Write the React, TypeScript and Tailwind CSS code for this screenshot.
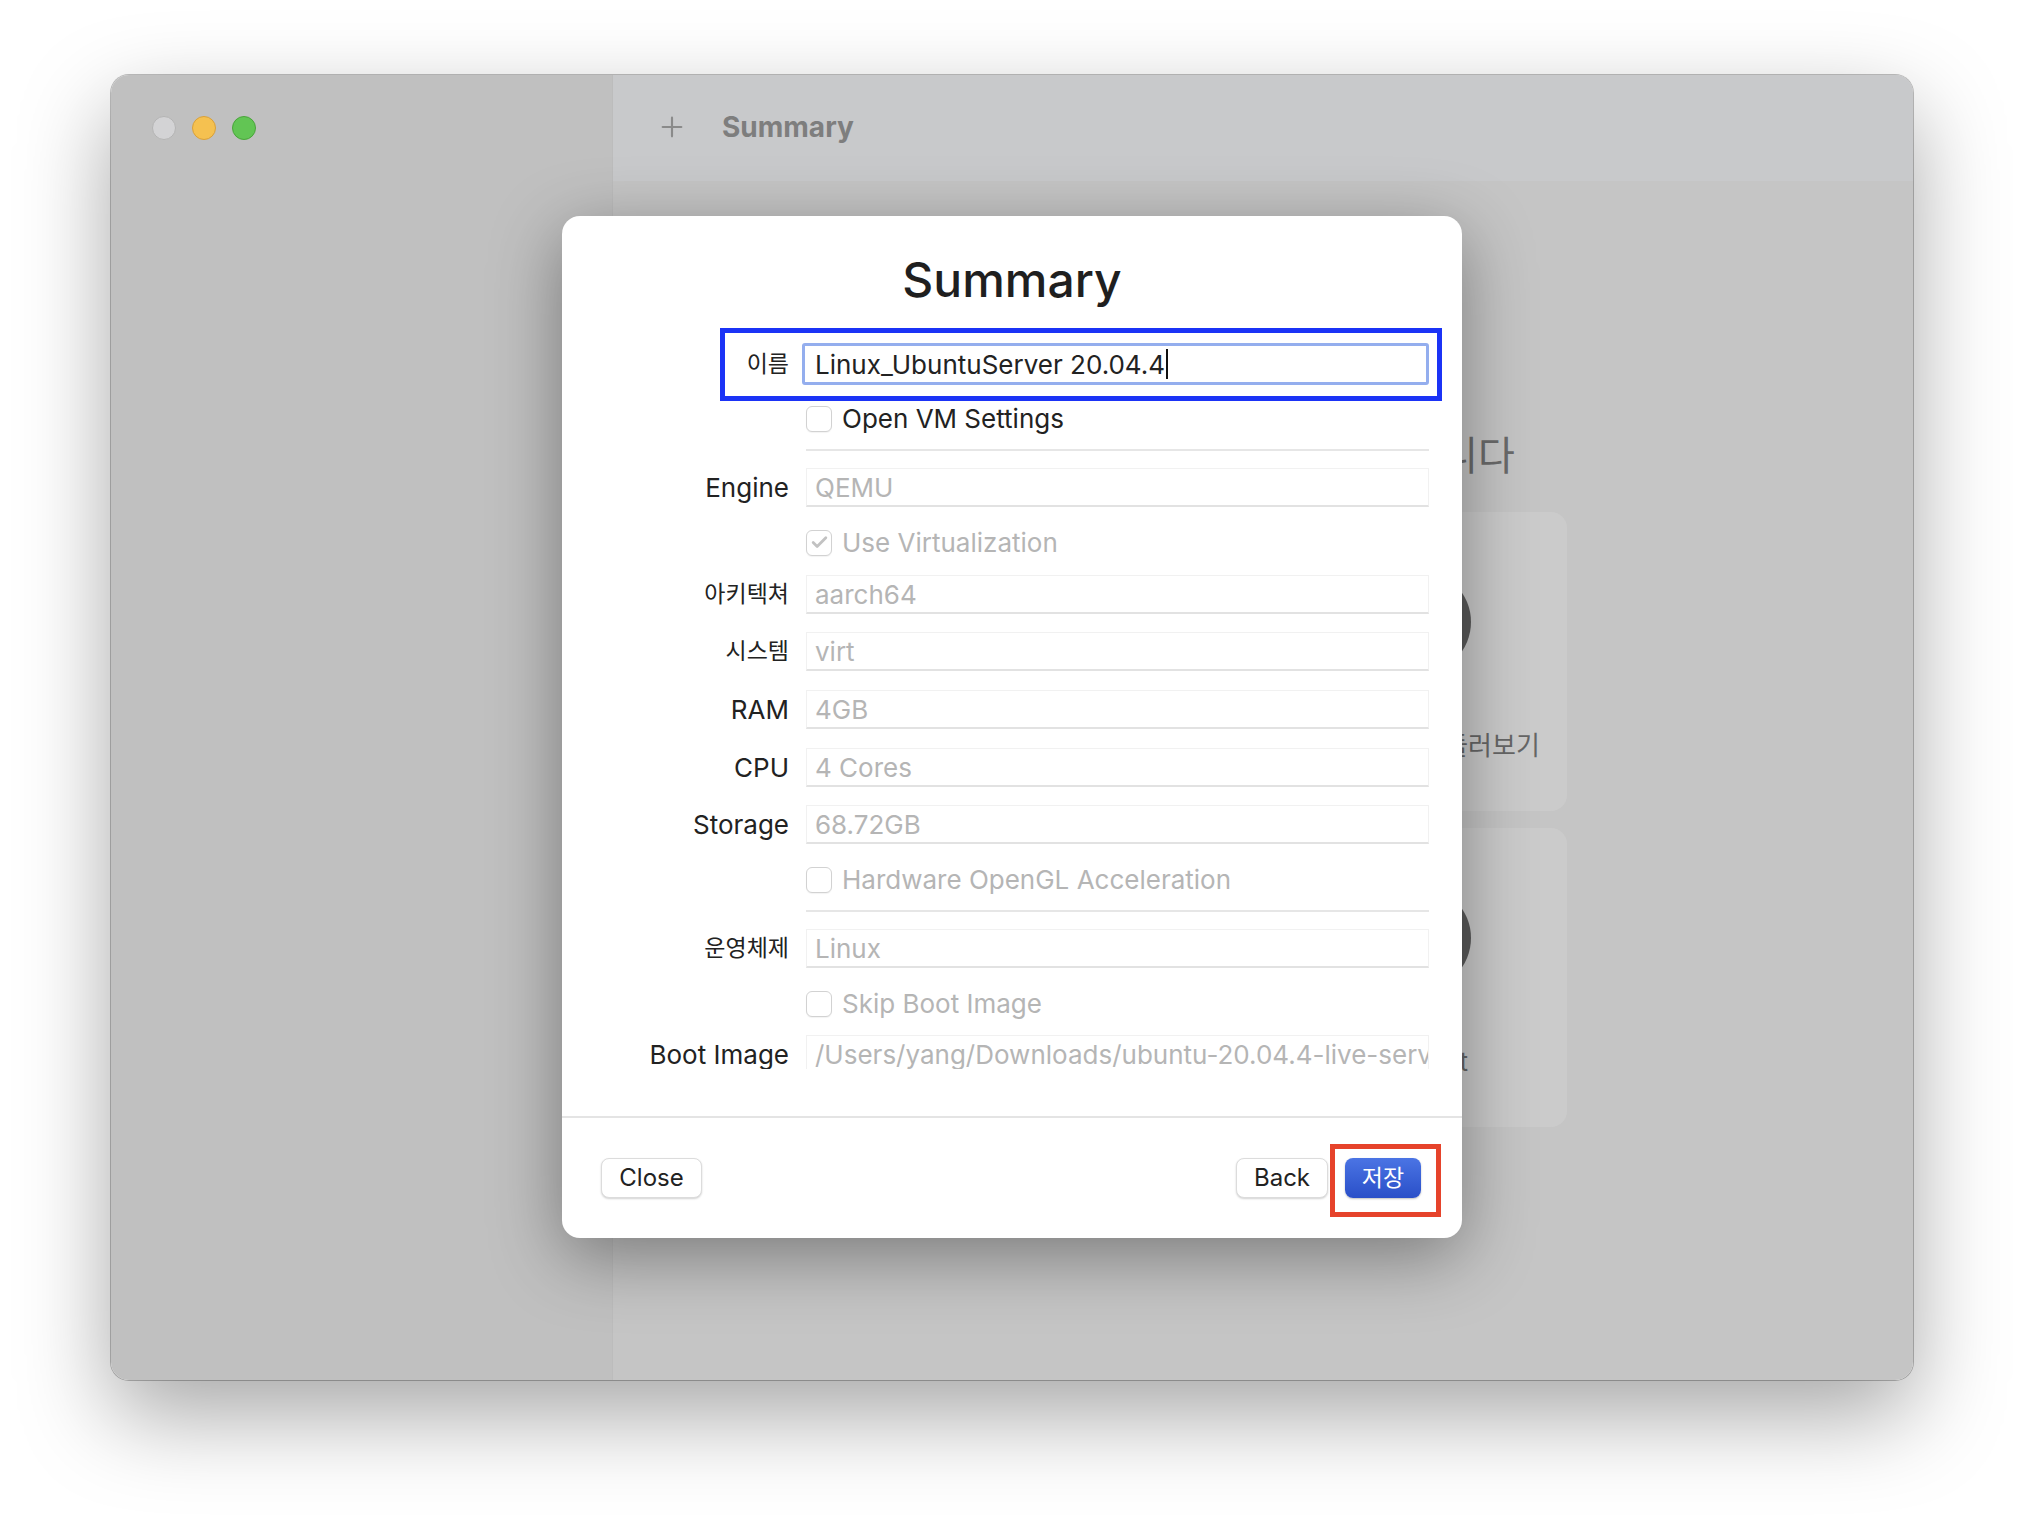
import { Plus, Check } from 'lucide-react'

const FONT = "font-['Inter','Noto_Sans_CJK_KR',sans-serif]"

function Field({ value }: { value: string }) {
  return (
    <div className="flex-1 min-w-0 h-[39px] flex items-center px-[8px] bg-white border border-[#f1f1f1] border-b-2 border-b-[#e2e2e2] text-[26px] text-[#b5b5b5] overflow-hidden whitespace-nowrap">
      {value}
    </div>
  )
}

function Row({ label, ko, value, className }: { label: string; ko?: boolean; value: string; className: string }) {
  return (
    <div className={`flex items-center shrink-0 pr-[33px] ${className}`}>
      <div className={`w-[227px] shrink-0 text-right text-[#222] whitespace-nowrap ${ko ? 'text-[23px]' : 'text-[26px]'}`}>{label}</div>
      <div className="ml-[17px] flex-1 min-w-0 flex">
        <Field value={value} />
      </div>
    </div>
  )
}

function Checkbox({ label, checked, disabled, className }: { label: string; checked?: boolean; disabled?: boolean; className: string }) {
  return (
    <div className={`flex items-center h-[39px] shrink-0 ml-[244px] ${className}`}>
      <div className="w-[26px] h-[26px] rounded-[6px] border border-[#d2d2d2] bg-white shadow-[0_1px_1px_rgba(0,0,0,0.05)] flex items-center justify-center">
        {checked && <Check className="w-[19px] h-[19px] text-[#c2c2c2]" strokeWidth={3.5} />}
      </div>
      <span className={`ml-[10px] text-[26px] ${disabled ? 'text-[#b5b5b5]' : 'text-[#222]'}`}>{label}</span>
    </div>
  )
}

function Separator({ className }: { className: string }) {
  return <div className={`h-[2px] shrink-0 bg-[#e6e6e6] ml-[244px] mr-[33px] ${className}`} />
}

export default function App() {
  return (
    <div className={`w-[2024px] h-[1528px] bg-white overflow-hidden pl-[111px] pt-[75px] ${FONT}`}>
      {/* window */}
      <div className="relative w-[1802px] h-[1305px] rounded-[18px] overflow-hidden flex ring-1 ring-black/25 shadow-[0_35px_90px_rgba(0,0,0,0.35)]">
        {/* sidebar */}
        <div className="w-[502px] h-full bg-[#c0c0c0] border-r border-[#bcbcbc] pt-[41px] pl-[41px]">
          <div className="flex gap-[16px]">
            <div className="w-[24px] h-[24px] rounded-full bg-[#d3d3d5] border border-[#b4b4b4]" />
            <div className="w-[24px] h-[24px] rounded-full bg-[#f5c150] border border-[#d8a03a]" />
            <div className="w-[24px] h-[24px] rounded-full bg-[#62c554] border border-[#4aa43b]" />
          </div>
        </div>

        {/* main */}
        <div className="flex-1 h-full bg-[#c5c5c5] flex flex-col">
          <div className="h-[106px] shrink-0 bg-[#c8c9cb] flex items-center pl-[43px] pb-[2px]">
            <Plus className="w-[32px] h-[32px] text-[#8a8a8a]" strokeWidth={1.6} />
            <span className="ml-[34px] text-[28px] font-bold text-[#7e7e7e]">Summary</span>
          </div>
          <div className="flex-1 flex flex-col items-center pt-[251px]">
            <div className="text-[40px] leading-[48px] text-[#6a6a6a] pl-[10px]">UTM에 오신 것을 환영합니다</div>
            <div className="mt-[32px] grid grid-cols-[296px_296px] gap-x-[16px] gap-y-[17px]">
              {['새 가상 머신 만들기', 'UTM 갤러리 둘러보기', '사용자 가이드', 'Support'].map((t) => (
                <div key={t} className="h-[299px] rounded-[16px] bg-[#cbcbcb] flex flex-col items-center pt-[58px]">
                  <div className="w-[104px] h-[104px] rounded-full bg-[#5b5b5b]" />
                  <div className="mt-[52px] text-[26px] text-[#666]">{t}</div>
                </div>
              ))}
            </div>
          </div>
        </div>

        {/* sheet */}
        <div className="absolute left-[451px] top-[141px] w-[900px] h-[1022px] bg-white rounded-[18px] flex flex-col shadow-[0_18px_70px_rgba(0,0,0,0.38)]">
          <div className="pt-[39px] text-[48px] leading-[50px] font-medium text-center text-[#1f1f1f] shrink-0">Summary</div>

          <div className="mt-[37px] h-[727px] overflow-hidden flex flex-col shrink-0">
            <div className="flex items-center h-[44px] shrink-0 pr-[33px]">
              <div className="w-[227px] shrink-0 text-right text-[23px] text-[#222]">이름</div>
              <div className="ml-[13px] flex-1 h-[42px] border-[3px] border-[#94aeee] rounded-[3px] flex items-center pl-[10px] text-[26px] text-[#222] whitespace-nowrap">
                Linux_UbuntuServer 20.04.4
                <span className="ml-[1px] w-[2px] h-[30px] bg-[#111]" />
              </div>
            </div>
            <Checkbox label="Open VM Settings" className="mt-[13px]" />
            <Separator className="mt-[11px]" />
            <Row label="Engine" value="QEMU" className="mt-[17px]" />
            <Checkbox label="Use Virtualization" checked disabled className="mt-[16px]" />
            <Row label="아키텍쳐" ko value="aarch64" className="mt-[13px]" />
            <Row label="시스템" ko value="virt" className="mt-[18px]" />
            <Row label="RAM" value="4GB" className="mt-[19px]" />
            <Row label="CPU" value="4 Cores" className="mt-[19px]" />
            <Row label="Storage" value="68.72GB" className="mt-[18px]" />
            <Checkbox label="Hardware OpenGL Acceleration" disabled className="mt-[16px]" />
            <Separator className="mt-[11px]" />
            <Row label="운영체제" ko value="Linux" className="mt-[17px]" />
            <Checkbox label="Skip Boot Image" disabled className="mt-[16px]" />
            <Row label="Boot Image" value="/Users/yang/Downloads/ubuntu-20.04.4-live-server-arm64.iso" className="mt-[12px]" />
          </div>

          <div className="mt-[47px] h-[2px] bg-[#e4e4e4] shrink-0" />

          <div className="flex-1 flex items-center pl-[39px] pr-[41px]">
            <button className="h-[40px] w-[101px] rounded-[8px] bg-white border border-[#dcdcdc] shadow-[0_1px_2px_rgba(0,0,0,0.18)] text-[24px] text-[#222]">
              Close
            </button>
            <div className="flex-1" />
            <button className="h-[40px] w-[92px] rounded-[8px] bg-white border border-[#dcdcdc] shadow-[0_1px_2px_rgba(0,0,0,0.18)] text-[24px] text-[#222]">
              Back
            </button>
            <button className="ml-[17px] h-[40px] w-[76px] rounded-[8px] bg-gradient-to-b from-[#4b74e4] to-[#2a4fc8] shadow-[0_1px_2px_rgba(0,0,0,0.25)] text-[23px] text-white">
              저장
            </button>
          </div>

          {/* annotation boxes */}
          <div className="absolute left-[158px] top-[112px] w-[722px] h-[73px] border-[5px] border-[#1b33f6]" />
          <div className="absolute left-[768px] top-[928px] w-[111px] h-[73px] border-[5px] border-[#e6432b]" />
        </div>
      </div>
    </div>
  )
}
